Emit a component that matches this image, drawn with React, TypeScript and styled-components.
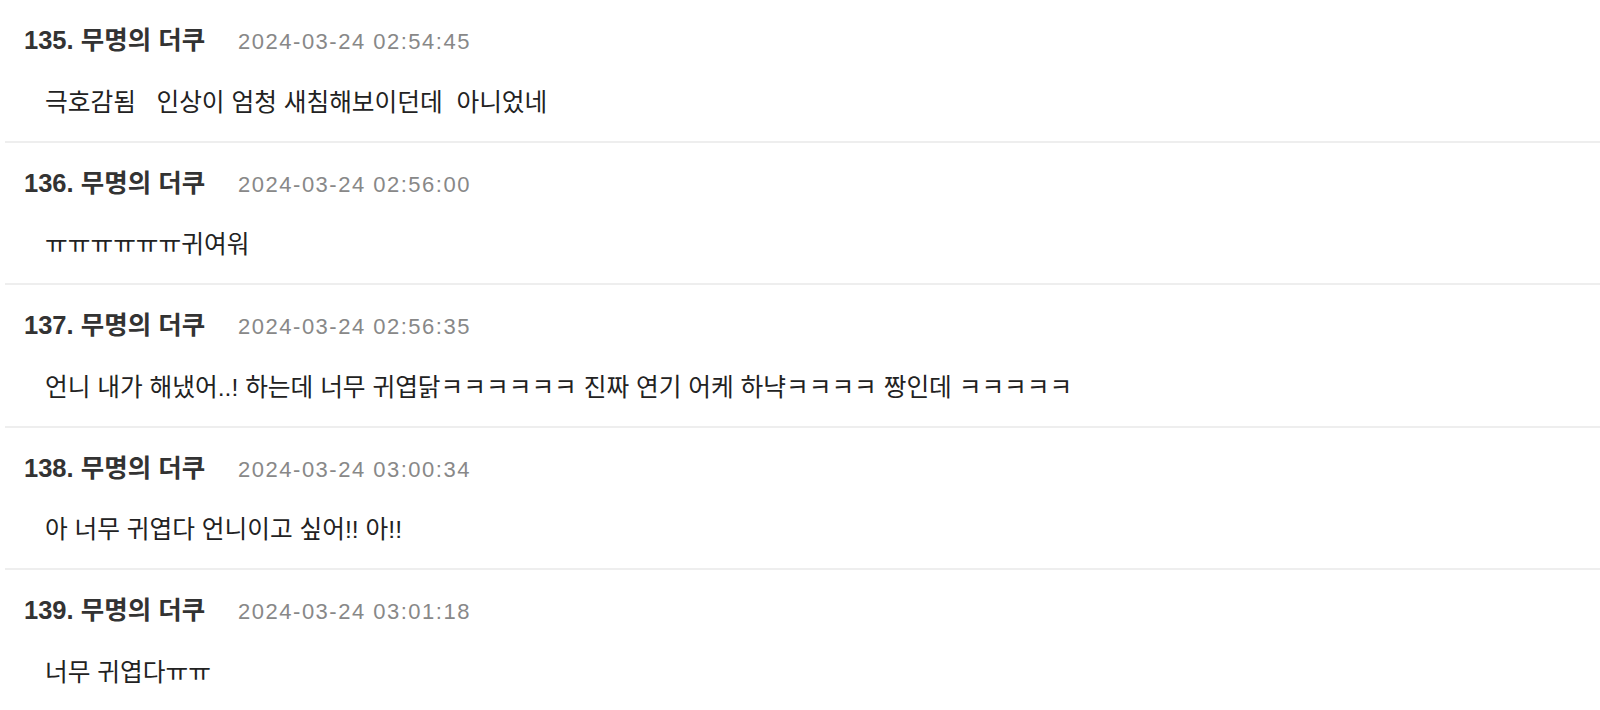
import React from "react";
import styled, { createGlobalStyle } from "styled-components";

const GlobalStyle = createGlobalStyle`
  html, body {
    margin: 0;
    padding: 0;
    background: #ffffff;
  }
  body {
    font-family: "Liberation Sans", "Noto Sans CJK KR", sans-serif;
    color: #222;
  }
`;

const List = styled.ul`
  list-style: none;
  margin: 0 0 0 5px;
  padding: 0;
`;

const Item = styled.li`
  padding: 24px 0 22px 19px;
  border-bottom: 2px solid #eeeeee;
`;

const Head = styled.div`
  display: flex;
  align-items: baseline;
  height: 32px;
  line-height: 32px;
`;

const Author = styled.span`
  font-size: 25.5px;
  font-weight: 700;
  color: #333;
`;

const Time = styled.span`
  margin-left: 33px;
  font-size: 22px;
  color: #888;
  letter-spacing: 1.5px;
`;

const Body = styled.p`
  margin: 30.5px 0 0;
  padding-left: 21px;
  font-size: 24.7px;
  line-height: 32px;
  color: #222;
  white-space: pre-wrap;
`;

const comments = [
  { no: 135, time: "2024-03-24 02:54:45", text: "극호감됨   인상이 엄청 새침해보이던데  아니었네" },
  { no: 136, time: "2024-03-24 02:56:00", text: "ㅠㅠㅠㅠㅠㅠ귀여워" },
  {
    no: 137,
    time: "2024-03-24 02:56:35",
    text: "언니 내가 해냈어..! 하는데 너무 귀엽닭ㅋㅋㅋㅋㅋㅋ 진짜 연기 어케 하냑ㅋㅋㅋㅋ 짱인데 ㅋㅋㅋㅋㅋ",
  },
  { no: 138, time: "2024-03-24 03:00:34", text: "아 너무 귀엽다 언니이고 싶어!! 아!!" },
  { no: 139, time: "2024-03-24 03:01:18", text: "너무 귀엽다ㅠㅠ" },
];

export default function App() {
  return (
    <>
      <GlobalStyle />
      <List>
        {comments.map((c) => (
          <Item key={c.no}>
            <Head>
              <Author>{c.no}. 무명의 더쿠</Author>
              <Time>{c.time}</Time>
            </Head>
            <Body>{c.text}</Body>
          </Item>
        ))}
      </List>
    </>
  );
}
